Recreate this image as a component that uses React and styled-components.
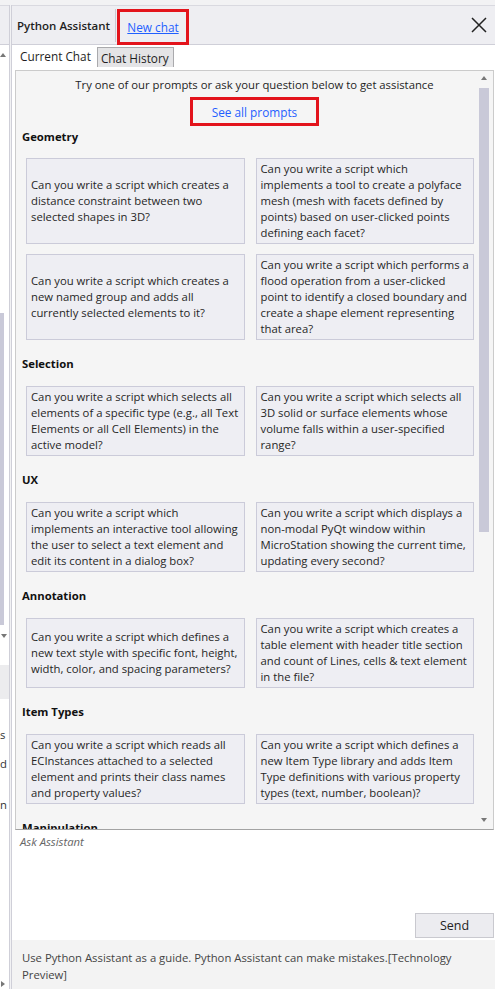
import React from "react";
import styled, { createGlobalStyle } from "styled-components";

const GlobalStyle = createGlobalStyle`
  html, body {
    margin: 0;
    padding: 0;
  }
  body {
    font-family: "Open Sans", "Noto Sans", sans-serif;
    font-size: 11.3px;
    color: #222;
    background: #f2f2f4;
  }
  * {
    box-sizing: border-box;
  }
`;

const Screen = styled.div`
  width: 495px;
  height: 989px;
  padding-top: 5px;
  display: flex;
  gap: 1px;
  background: #f2f2f4;
  overflow: hidden;
`;

/* the clipped neighbour panel on the far left */
const SideStrip = styled.div`
  width: 10px;
  flex: none;
  border-right: 1px solid #cfcfd8;
  display: flex;
  flex-direction: column;
  background: #fff;
  overflow: hidden;
`;

const StripHeader = styled.div`
  height: 40px;
  flex: none;
  background: #eeeef2;
  border-top: 1px solid #d9d9e0;
  border-bottom: 1px solid #cfcfd8;
`;

const StripSpace = styled.div`
  height: ${(p) => p.$h}px;
  flex: none;
`;

const StripThumb = styled.div`
  width: 4px;
  height: 312px;
  flex: none;
  background: #c9c9d8;
`;

const StripBand = styled.div`
  height: 34px;
  flex: none;
  background: #ececee;
`;

const StripLetter = styled.div`
  font-size: 11.3px;
  line-height: 16px;
  height: 16px;
  color: #333;
`;

const Arrow = styled.div`
  width: 0;
  height: 0;
  flex: none;
  border-left: ${(p) => (p.$dir === "right" ? "4px solid #777" : "3.5px solid transparent")};
  border-right: ${(p) => (p.$dir === "right" ? "0" : "3.5px solid transparent")};
  border-top: ${(p) =>
    p.$dir === "down" ? "4px solid #777" : p.$dir === "right" ? "3px solid transparent" : "0"};
  border-bottom: ${(p) =>
    p.$dir === "up" ? "4px solid #777" : p.$dir === "right" ? "3px solid transparent" : "0"};
  margin-left: ${(p) => p.$left || 0}px;
`;

const Panel = styled.div`
  flex: 1;
  min-width: 0;
  border-left: 1px solid #cfcfd8;
  display: flex;
  flex-direction: column;
  background: #fff;
`;

const Header = styled.div`
  height: 40px;
  flex: none;
  display: flex;
  align-items: center;
  background: #eeeef2;
  border-top: 1px solid #d9d9e0;
  border-bottom: 1px solid #cfcfd8;
  padding: 0 7px 0 5px;
`;

const Title = styled.div`
  width: 98px;
  font-weight: 600;
  font-size: 11.5px;
  color: #1e1e1e;
`;

const HeaderDivider = styled.div`
  width: 1px;
  height: 33px;
  background: #cacad2;
`;

const HighlightBox = styled.div`
  width: ${(p) => p.$w}px;
  height: ${(p) => p.$h}px;
  border: 3px solid #e3141c;
  display: flex;
  align-items: center;
  justify-content: center;
  flex: none;
`;

const NewChatBox = styled(HighlightBox)`
  align-self: flex-end;
  margin: 0 0 -1px 1px;
`;

const LinkText = styled.a`
  color: #1f5fff;
  font-size: 11.8px;
  text-decoration: ${(p) => (p.$underline ? "underline" : "none")};
  cursor: pointer;
`;

const CloseButton = styled.button`
  margin-left: auto;
  border: none;
  background: none;
  padding: 0;
  width: 18px;
  height: 18px;
  display: flex;
  align-items: center;
  justify-content: center;
  cursor: pointer;
`;

const TabBar = styled.div`
  height: 22px;
  flex: none;
  display: flex;
  align-items: flex-end;
  padding-left: 2px;
  background: #fff;
`;

const Tab = styled.div`
  height: ${(p) => (p.$active ? 22 : 20)}px;
  display: flex;
  align-items: center;
  padding: ${(p) => (p.$active ? "0 6px" : "0 4px 0 3px")};
  background: ${(p) => (p.$active ? "#fff" : "#e4e4e6")};
  border: ${(p) => (p.$active ? "none" : "1px solid #aaaaad")};
  border-bottom: none;
  font-size: 11.8px;
  color: #1e1e1e;
`;

const ContentArea = styled.div`
  height: 763px;
  flex: none;
  padding: 3px 1px 0 3px;
  display: flex;
  background: #fff;
`;

const ScrollBox = styled.div`
  flex: 1;
  position: relative;
  overflow: hidden;
  background: #f5f5f5;
  border: 1px solid #cbcbcb;
  border-bottom-color: #a3a3a3;
  padding: 6px 19px 0 6px;
`;

const Scrollbar = styled.div`
  position: absolute;
  top: 0;
  bottom: 0;
  right: 4px;
  width: 10px;
  display: flex;
  flex-direction: column;
  align-items: center;
  padding: 5px 0 7px;
`;

const Thumb = styled.div`
  width: 10px;
  height: 444px;
  margin-top: 8px;
  background: #c9c9d8;
`;

const ScrollSpacer = styled.div`
  flex: 1;
`;

const Intro = styled.div`
  margin: 0 -19px 0 -6px;
  display: flex;
  flex-direction: column;
  align-items: center;
`;

const IntroText = styled.div`
  line-height: 16px;
  color: #1e1e1e;
`;

const PromptsBox = styled(HighlightBox)`
  margin-top: 4px;
`;

const SectionTitle = styled.div`
  font-weight: 700;
  line-height: 16px;
  color: #111;
  margin: ${(p) => (p.$first ? "3px 0 13px" : "16px 0 14px")};
`;

const CardGrid = styled.div`
  display: grid;
  grid-template-columns: 1fr 1fr;
  gap: 10px 11px;
  margin-left: 4px;
`;

const Card = styled.div`
  display: flex;
  align-items: center;
  background: #eeeef3;
  border: 1px solid #cbcbd9;
  padding: 2px 4px;
  line-height: 16px;
  white-space: pre;
  color: #262626;
  cursor: pointer;
`;

const InputArea = styled.div`
  height: 110px;
  flex: none;
  display: flex;
  flex-direction: column;
  background: #fff;
  padding: 0 1px 2px 0;
`;

const Prompt = styled.textarea`
  flex: 1;
  border: none;
  outline: none;
  resize: none;
  padding: 4px 8px;
  font-family: inherit;
  font-size: 11.3px;
  line-height: 16px;
  color: #222;
  background: #fff;
  &::placeholder {
    font-style: italic;
    color: #666;
  }
`;

const SendButton = styled.button`
  align-self: flex-end;
  width: 79px;
  height: 25px;
  background: #ececf0;
  border: 1px solid #c9c9cf;
  font-family: inherit;
  font-size: 12.5px;
  color: #222;
  cursor: pointer;
`;

const Footer = styled.div`
  height: 49px;
  flex: none;
  background: #f3f3f3;
  padding: 9px 10px;
  line-height: 17px;
  color: #444;
  white-space: pre-line;
`;

const sections = [
  {
    title: "Geometry",
    prompts: [
      "Can you write a script which creates a\ndistance constraint between two\nselected shapes in 3D?",
      "Can you write a script which\nimplements a tool to create a polyface\nmesh (mesh with facets defined by\npoints) based on user-clicked points\ndefining each facet?",
      "Can you write a script which creates a\nnew named group and adds all\ncurrently selected elements to it?",
      "Can you write a script which performs a\nflood operation from a user-clicked\npoint to identify a closed boundary and\ncreate a shape element representing\nthat area?",
    ],
  },
  {
    title: "Selection",
    prompts: [
      "Can you write a script which selects all\nelements of a specific type (e.g., all Text\nElements or all Cell Elements) in the\nactive model?",
      "Can you write a script which selects all\n3D solid or surface elements whose\nvolume falls within a user-specified\nrange?",
    ],
  },
  {
    title: "UX",
    prompts: [
      "Can you write a script which\nimplements an interactive tool allowing\nthe user to select a text element and\nedit its content in a dialog box?",
      "Can you write a script which displays a\nnon-modal PyQt window within\nMicroStation showing the current time,\nupdating every second?",
    ],
  },
  {
    title: "Annotation",
    prompts: [
      "Can you write a script which defines a\nnew text style with specific font, height,\nwidth, color, and spacing parameters?",
      "Can you write a script which creates a\ntable element with header title section\nand count of Lines, cells & text element\nin the file?",
    ],
  },
  {
    title: "Item Types",
    prompts: [
      "Can you write a script which reads all\nECInstances attached to a selected\nelement and prints their class names\nand property values?",
      "Can you write a script which defines a\nnew Item Type library and adds Item\nType definitions with various property\ntypes (text, number, boolean)?",
    ],
  },
  {
    title: "Manipulation",
    prompts: [],
  },
];

const App = () => {
  return (
    <>
      <GlobalStyle />
      <Screen>
        <SideStrip>
          <StripHeader />
          <StripSpace $h={8} />
          <Arrow $dir="up" $left={0} />
          <StripSpace $h={256} />
          <StripThumb />
          <StripSpace $h={9} />
          <Arrow $dir="down" $left={1} />
          <StripSpace $h={27} />
          <StripBand />
          <StripSpace $h={28} />
          <StripLetter>s</StripLetter>
          <StripSpace $h={13} />
          <StripLetter>d</StripLetter>
          <StripSpace $h={25} />
          <StripLetter>n</StripLetter>
          <StripSpace $h={168} />
          <Arrow $dir="right" $left={1} />
        </SideStrip>

        <Panel>
          <Header>
            <Title>Python Assistant</Title>
            <HeaderDivider />
            <NewChatBox $w={72} $h={36}>
              <LinkText $underline>New chat</LinkText>
            </NewChatBox>
            <CloseButton aria-label="Close">
              <svg width="16" height="16" viewBox="0 0 16 16">
                <path d="M1 1 L15 15 M15 1 L1 15" stroke="#222" strokeWidth="1.5" />
              </svg>
            </CloseButton>
          </Header>

          <TabBar>
            <Tab $active>Current Chat</Tab>
            <Tab>Chat History</Tab>
          </TabBar>

          <ContentArea>
            <ScrollBox>
              <Intro>
                <IntroText>Try one of our prompts or ask your question below to get assistance</IntroText>
                <PromptsBox $w={129} $h={29}>
                  <LinkText>See all prompts</LinkText>
                </PromptsBox>
              </Intro>

              {sections.map((section, i) => (
                <div key={section.title}>
                  <SectionTitle $first={i === 0}>{section.title}</SectionTitle>
                  <CardGrid>
                    {section.prompts.map((text) => (
                      <Card key={text}>{text}</Card>
                    ))}
                  </CardGrid>
                </div>
              ))}

              <Scrollbar>
                <Arrow $dir="up" />
                <Thumb />
                <ScrollSpacer />
                <Arrow $dir="down" />
              </Scrollbar>
            </ScrollBox>
          </ContentArea>

          <InputArea>
            <Prompt placeholder="Ask Assistant" />
            <SendButton>Send</SendButton>
          </InputArea>

          <Footer>
            {"Use Python Assistant as a guide. Python Assistant can make mistakes.[Technology\nPreview]"}
          </Footer>
        </Panel>
      </Screen>
    </>
  );
};

export default App;
